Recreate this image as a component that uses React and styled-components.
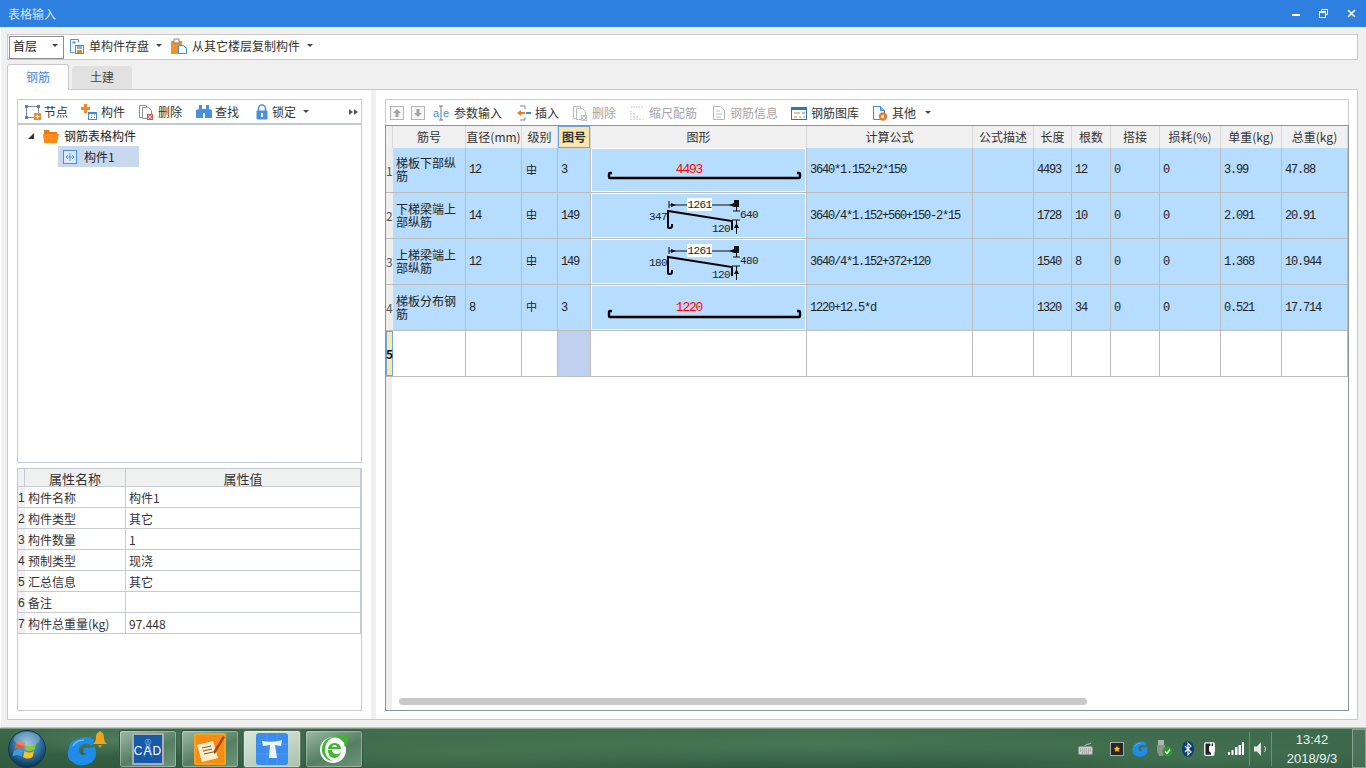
import React from "react";
import styled, { createGlobalStyle } from "styled-components";

const GlobalStyle = createGlobalStyle`
  html, body { margin: 0; padding: 0; overflow: hidden; }
  body { font-family: "Noto Sans CJK SC", "Liberation Sans", sans-serif; font-size: 12px; color: #333; }
  * { box-sizing: border-box; }
`;

const Screen = styled.div`
  width: 1366px;
  height: 768px;
  display: flex;
  flex-direction: column;
  background: #f0f0f0;
`;

const TitleBar = styled.div`
  height: 27px;
  flex: none;
  background: #2e7fe0;
  color: #d6e6fa;
  display: flex;
  align-items: center;
  padding: 0 10px 0 8px;
  line-height: 27px;
`;

const TitleText = styled.div`
  flex: 1;
`;

const WinButtons = styled.div`
  display: flex;
  align-items: center;
  gap: 19px;
`;

const Window = styled.div`
  flex: 1;
  min-height: 0;
  display: flex;
  flex-direction: column;
  padding: 7px 8px 7px 6px;
  border-left: 1px solid #fff;
  border-bottom: 1px solid #c4c4c4;
`;

const TopBar = styled.div`
  height: 26px;
  flex: none;
  background: #fff;
  border: 1px solid #c9c9c9;
  display: flex;
  align-items: center;
  padding-left: 1px;
`;

const Floor = styled.div`
  width: 55px;
  height: 23px;
  border: 1px solid #8f8f8f;
  background: #fff;
  color: #222;
  display: flex;
  align-items: center;
  justify-content: space-between;
  padding: 0 5px 3px 3px;
  margin-right: 5px;
`;

const TopTool = styled.div`
  display: flex;
  align-items: center;
  gap: ${(p) => p.$gap}px;
  margin-left: ${(p) => p.$left || 0}px;
  padding-bottom: 3px;
  white-space: nowrap;
`;

const Caret = styled.span`
  display: inline-block;
  width: 0;
  height: 0;
  border-left: 3px solid transparent;
  border-right: 3px solid transparent;
  border-top: 3px solid #444;
  margin-left: ${(p) => p.$left || 0}px;
`;

const Tool = styled.div`
  display: flex;
  align-items: center;
  gap: ${(p) => p.$gap || 5}px;
  color: ${(p) => (p.$off ? "#a6a6a6" : "#333")};
  white-space: nowrap;
  margin-left: ${(p) => p.$left || 0}px;
`;

const Tabs = styled.div`
  height: 29px;
  flex: none;
  display: flex;
  align-items: flex-end;
  padding-top: 4px;
  gap: 3px;
  position: relative;
  z-index: 1;
`;

const Tab = styled.div`
  height: ${(p) => (p.$on ? 26 : 23)}px;
  width: ${(p) => (p.$on ? 62 : 60)}px;
  margin-bottom: ${(p) => (p.$on ? -1 : 0)}px;
  padding-bottom: 2px;
  background: ${(p) => (p.$on ? "#fff" : "#e1e1e1")};
  color: ${(p) => (p.$on ? "#3d8ae6" : "#444")};
  border: ${(p) => (p.$on ? "1px solid #c9c9c9" : "none")};
  border-bottom: none;
  border-radius: 3px 3px 0 0;
  display: flex;
  align-items: center;
  justify-content: center;
  font-size: 12px;
`;

const Panel = styled.div`
  flex: 1;
  min-height: 0;
  background: #fff;
  border: 1px solid #c9c9c9;
  display: flex;
  padding: 9px 0 8px 9px;
`;

const LeftCol = styled.div`
  width: 345px;
  flex: none;
  display: flex;
  flex-direction: column;
  gap: 5px;
`;

const Splitter = styled.div`
  width: 5px;
  flex: none;
  margin: -9px 0 -8px 9px;
  background: #f0f0f0;
`;

const RightCol = styled.div`
  width: 964px;
  margin-left: 9px;
  flex: none;
  display: flex;
  flex-direction: column;
`;

const TreeBox = styled.div`
  height: 364px;
  flex: none;
  border: 1px solid #c5cad3;
  display: flex;
  flex-direction: column;
`;

const TreeTools = styled.div`
  height: 25px;
  flex: none;
  display: flex;
  align-items: center;
  padding-left: 7px;
  border-bottom: 2px solid #c5cad3;
`;

const More = styled.div`
  margin-left: auto;
  margin-right: 3px;
  display: flex;
  gap: 1px;
`;

const MoreArrow = styled.span`
  width: 0;
  height: 0;
  border-top: 3px solid transparent;
  border-bottom: 3px solid transparent;
  border-left: 4px solid #555;
`;

const TreeArrow = styled.span`
  width: 0;
  height: 0;
  border-left: 6px solid transparent;
  border-bottom: 6px solid #333;
`;

const TreeRow = styled.div`
  display: flex;
  align-items: center;
  height: 21px;
  margin-left: ${(p) => p.$indent}px;
  width: ${(p) => p.$width || "auto"};
  background: ${(p) => (p.$selected ? "#c8d8ee" : "transparent")};
  padding-left: ${(p) => (p.$selected ? 5 : 0)}px;
  gap: ${(p) => p.$gap}px;
  color: #222;
`;

const PropBox = styled.div`
  flex: 1;
  border: 1px solid #c5cad3;
`;

const PropGrid = styled.div`
  display: grid;
  grid-template-columns: 7px 101px 235px;
`;

const PropHead = styled.div`
  height: 18px;
  background: #f0f0f0;
  border-bottom: 1px solid #c5cad3;
  border-right: 1px solid #c5cad3;
  text-align: center;
  line-height: 20px;
  font-size: 13px;
  color: #333;
`;

const PropIdx = styled.div`
  height: 21px;
  background: #f0f0f0;
  border-bottom: 1px solid #c5cad3;
  font-family: "Liberation Sans", sans-serif;
  font-size: 12px;
  line-height: 23px;
  white-space: nowrap;
  color: #333;
`;

const PropCell = styled.div`
  height: 21px;
  border-bottom: 1px solid #c5cad3;
  border-right: 1px solid #c5cad3;
  padding-left: 3px;
  line-height: 21px;
  color: #333;
  white-space: nowrap;
`;

const GridTools = styled.div`
  height: 26px;
  flex: none;
  border: 1px solid #c9ccd2;
  border-bottom: none;
  display: flex;
  align-items: center;
  padding-left: 4px;
`;

const GridBox = styled.div`
  flex: 1;
  min-height: 0;
  position: relative;
  border: 1px solid #8e949c;
  background: linear-gradient(90deg, #eee 6px, #fff 6px);
`;

const Table = styled.table`
  table-layout: fixed;
  border-collapse: separate;
  border-spacing: 0;
  width: 962px;
`;

const Th = styled.th`
  height: 22px;
  padding: 0 0 2px;
  font-weight: ${(p) => (p.$active ? 700 : 400)};
  font-size: 12px;
  color: #333;
  background: ${(p) => (p.$active ? "#ffe6a8" : "#f0f0f0")};
  border-right: 1px solid #d8d8d8;
  box-shadow: ${(p) => (p.$active ? "inset 0 0 0 1px #6ba6e8" : "none")};
  white-space: nowrap;
  overflow: hidden;
`;

const Tr = styled.tr`
  height: 46px;
  &:nth-child(1) {
    height: 45px;
  }
`;

const Td = styled.td`
  padding: 0 0 0 3px;
  background: ${(p) => p.$bg || "#b6dcfe"};
  border-right: 1px solid #bcbcbc;
  border-bottom: 1px solid #bcbcbc;
  font-family: "Liberation Mono", "Noto Sans CJK SC", monospace;
  font-size: 12px;
  letter-spacing: -1.2px;
  color: #222;
  white-space: nowrap;
`;

const NameTd = styled(Td)`
  font-family: "Noto Sans CJK SC", sans-serif;
  font-size: 12px;
  letter-spacing: 0;
  line-height: 13px;
  white-space: normal;
  padding-left: 3px;
  padding-bottom: 2px;
  word-break: break-all;
`;

const IdxTd = styled.td`
  padding: 0;
  background: ${(p) => (p.$current ? "#fbe7a6" : "#eee")};
  border-bottom: 1px solid #bcbcbc;
  box-shadow: ${(p) => (p.$current ? "inset 0 0 0 1px #6ba6e8" : "none")};
  font-size: 12px;
  font-weight: ${(p) => (p.$current ? 700 : 400)};
  color: ${(p) => (p.$current ? "#111" : "#555")};
  white-space: nowrap;
  overflow: visible;
`;

const ShapeTd = styled(Td)`
  padding: 0;
  box-shadow: inset 0 0 0 1px #fff;
  line-height: 0;
`;

const Grade = styled.span`
  position: relative;
  top: -1px;
  display: inline-block;
  margin-left: 1px;
  font-family: "Noto Sans CJK SC", sans-serif;
  font-size: 11px;
  letter-spacing: 0;
  &::after {
    content: "";
    display: ${(p) => (p.$bar ? "block" : "none")};
    position: absolute;
    left: 1px;
    right: 1px;
    bottom: 3px;
    height: 1px;
    background: #222;
  }
`;

const Scrollbar = styled.div`
  position: absolute;
  left: 13px;
  bottom: 5px;
  width: 688px;
  height: 7px;
  border-radius: 4px;
  background: #c9c9c9;
`;

const Taskbar = styled.div`
  height: 40px;
  flex: none;
  display: flex;
  align-items: center;
  color: #fff;
  border-top: 1px solid #7d9a86;
  background:
    radial-gradient(ellipse 120px 16px at 9% 30%, rgba(120, 170, 130, 0.35), transparent),
    radial-gradient(ellipse 300px 30px at 34% 60%, rgba(90, 140, 100, 0.45), transparent),
    radial-gradient(ellipse 360px 24px at 60% 40%, rgba(95, 150, 110, 0.4), transparent),
    radial-gradient(ellipse 260px 30px at 88% 70%, rgba(85, 135, 100, 0.45), transparent),
    linear-gradient(180deg, #3d6a4b, #2f5a3e);
`;

const Orb = styled.div`
  width: 38px;
  height: 38px;
  margin-left: 8px;
  flex: none;
`;

const Pinned = styled.div`
  position: relative;
  width: 40px;
  height: 38px;
  margin-left: 21px;
  flex: none;
  padding-top: 6px;
`;

const BellBadge = styled.div`
  position: absolute;
  left: 25px;
  top: 1px;
`;

const TaskGroup = styled.div`
  display: flex;
  gap: 4px;
  margin-left: 12px;
`;

const TaskBtn = styled.div`
  width: 58px;
  height: 38px;
  border: 1px solid rgba(20, 45, 30, 0.6);
  border-radius: 3px;
  box-shadow: inset 0 0 0 1px rgba(255, 255, 255, 0.32);
  background: ${(p) =>
    p.$hot
      ? "linear-gradient(160deg, #dbe8dd, #a9c2ad)"
      : "linear-gradient(155deg, #9cbaa4, #557f63 55%, #6c9478)"};
  display: flex;
  align-items: center;
  justify-content: center;
`;

const Tray = styled.div`
  margin-left: auto;
  display: flex;
  align-items: center;
  height: 100%;
`;

const TraySlot = styled.div`
  display: flex;
  align-items: center;
  justify-content: center;
  width: ${(p) => p.$w}px;
  margin-left: ${(p) => p.$left || 0}px;
`;

const TraySep = styled.div`
  width: 1px;
  height: 34px;
  background: rgba(255, 255, 255, 0.25);
  margin: 0 ${(p) => p.$right}px 0 ${(p) => p.$leftGap}px;
`;

const Clock = styled.div`
  width: 80px;
  text-align: center;
  font-family: "Liberation Sans", sans-serif;
  font-size: 13px;
  line-height: 19px;
  color: #eef4ee;
`;

const ShowDesktop = styled.div`
  width: 14px;
  height: 39px;
  border: 1px solid rgba(255, 255, 255, 0.35);
  background: rgba(255, 255, 255, 0.08);
`;

/* ---------- icons ---------- */

const Ico = ({ w = 16, h = 16, children }) => (
  <svg width={w} height={h} viewBox={`0 0 ${w} ${h}`} style={{ display: "block", flex: "none" }}>
    {children}
  </svg>
);

const SaveIcon = () => (
  <Ico>
    <path d="M1.5 1.5h8v3M1.5 1.5v13h4" fill="none" stroke="#4a93dd" />
    <rect x="3.5" y="3.5" width="3" height="2" fill="#4a93dd" />
    <rect x="6.5" y="7.5" width="8" height="8" fill="#fff" stroke="#3d8ad6" />
    <rect x="8" y="8" width="5" height="3" fill="#7db4ea" />
    <rect x="8" y="12" width="5" height="3" fill="#e8862a" />
  </Ico>
);
const ClipIcon = () => (
  <Ico>
    <rect x="0" y="3" width="11" height="13" fill="#ee9327" />
    <rect x="3" y="1" width="5" height="4" fill="#f4f4f4" stroke="#777" strokeWidth="0.8" />
    <path d="M7.5 7.5h5l3 3v5h-8z" fill="#fff" stroke="#3f8bdb" />
  </Ico>
);
const NodeIcon = () => (
  <Ico>
    <rect x="1.5" y="2.5" width="12" height="11" fill="none" stroke="#7d8a98" />
    <rect x="0" y="1" width="3" height="3" fill="#3f8bdb" />
    <rect x="12" y="1" width="3" height="3" fill="#3f8bdb" />
    <rect x="0" y="12" width="3" height="3" fill="#3f8bdb" />
    <rect x="9" y="9" width="7" height="7" fill="#f08a24" />
    <path d="M12.5 10.5v4M10.5 12.5h4" stroke="#fff" />
  </Ico>
);
const AddPartIcon = () => (
  <Ico>
    <path d="M3 0h3v3h3v3H6v3H3V6H0V3h3z" fill="#ee8a2c" />
    <rect x="7.5" y="8.5" width="8" height="7" fill="#fff" stroke="#3f8bdb" />
    <rect x="7" y="8" width="9" height="2" fill="#3f8bdb" />
    <path d="M10 11h1M13 11h1M10 13.5h1M13 13.5h1" stroke="#3f8bdb" />
  </Ico>
);
const DelIcon = ({ off }) => (
  <Ico>
    <path d="M1.5 1.5h7v12h-7z" fill="#fff" stroke={off ? "#bbb" : "#8a8f96"} />
    <path d="M4.5 3.5h6l3 3v8h-9z" fill="#fff" stroke={off ? "#bbb" : "#8a8f96"} />
    <rect x="9" y="10" width="6" height="6" fill={off ? "#c4c4c4" : "#d9534f"} />
    <path d="M10 11l4 4M14 11l-4 4" stroke="#fff" />
  </Ico>
);
const BinoIcon = () => (
  <Ico>
    <path d="M3 1h3v4h4V1h3v4l3 1v8H9V9H7v5H0V6l3-1z" fill="#4a90dc" />
    <rect x="7" y="6" width="2" height="2" fill="#4a90dc" />
  </Ico>
);
const LockIcon = () => (
  <Ico>
    <path d="M4.5 7V4.5a3.5 3.5 0 0 1 7 0V7" fill="none" stroke="#4a90dc" strokeWidth="1.6" />
    <rect x="2.5" y="6.5" width="11" height="9" rx="1" fill="#4a90dc" />
    <rect x="7" y="9" width="2" height="4" fill="#fff" />
  </Ico>
);
const FolderIcon = () => (
  <Ico>
    <path d="M1 2h5l1 2h7v2H1z" fill="#e97a10" />
    <path d="M0 6h16l-2 9H1z" fill="#ff8a1a" />
  </Ico>
);
const PartIcon = () => (
  <Ico w={14} h={14}>
    <rect x="0.5" y="0.5" width="13" height="13" fill="#dbe9f9" stroke="#4a90dc" />
    <path d="M7 3v8M3 7h8M5 5L3 7l2 2M9 5l2 2-2 2" fill="none" stroke="#4a90dc" strokeWidth="0.8" />
  </Ico>
);
const MoveIcon = ({ down }) => (
  <Ico w={14} h={14}>
    <rect x="0.5" y="0.5" width="13" height="13" fill="#f6f6f6" stroke="#b5b5b5" />
    <path d={down ? "M7 11L3 7h2.5V3h3v4H11z" : "M7 3l4 4H8.5v4h-3V7H3z"} fill="#a3a3a3" />
  </Ico>
);
const ParamIcon = () => (
  <Ico>
    <text x="0" y="12" fontFamily="Liberation Sans" fontSize="11" fill="#3f8bdb">a</text>
    <text x="10" y="12" fontFamily="Liberation Sans" fontSize="11" fill="#3f8bdb">e</text>
    <path d="M8 1v14M6 1h4M6 15h4" stroke="#777" fill="none" />
  </Ico>
);
const InsertIcon = () => (
  <Ico w={14}>
    <path d="M3 1h5v3M3 15h5v-3" fill="none" stroke="#7f8890" />
    <path d="M0 8l4-3v2h4v2H4v2z" fill="#ee7d1c" />
    <rect x="9" y="7" width="5" height="2" fill="#3f8bdb" />
  </Ico>
);
const ScaleIcon = () => (
  <Ico>
    <path d="M1 15V5M4 15V8M7 15V11M10 15v-2M13 15v-1M1 2h12" stroke="#bcbcbc" strokeDasharray="1.5 1" fill="none" />
  </Ico>
);
const InfoIcon = () => (
  <Ico>
    <path d="M2.5 1.5h7l4 4v9h-11z" fill="#fff" stroke="#b8b8b8" />
    <path d="M5 6h4M5 9h6M5 12h5" stroke="#bdbdbd" />
  </Ico>
);
const LibraryIcon = () => (
  <Ico>
    <rect x="0.5" y="2.5" width="15" height="12" fill="#fff" stroke="#2f73c4" />
    <rect x="0" y="2" width="16" height="3" fill="#2f73c4" />
    <path d="M3 8h6M3 12h3M8 12h2M12 12h2" stroke="#c58a3e" />
    <path d="M11 8h3" stroke="#3f8bdb" />
  </Ico>
);
const OtherIcon = () => (
  <Ico>
    <path d="M1.5 1.5h7l4 4v9h-11z" fill="#fff" stroke="#3f8bdb" />
    <path d="M8.5 1.5v4h4" fill="#8fbdf0" stroke="#3f8bdb" />
    <circle cx="11" cy="11.5" r="3" fill="none" stroke="#ee7d1c" strokeWidth="2.4" />
  </Ico>
);
const MinIcon = () => (
  <Ico w={8} h={8}>
    <rect x="0" y="4" width="8" height="2" fill="#fff" />
  </Ico>
);
const RestoreIcon = () => (
  <Ico w={9} h={9}>
    <path d="M2.5 2.5V.5h6v5h-2" fill="none" stroke="#fff" />
    <rect x="0.5" y="2.5" width="6" height="6" fill="none" stroke="#fff" />
    <rect x="0" y="2" width="7" height="2" fill="#fff" />
  </Ico>
);
const CloseIcon = () => (
  <Ico w={9} h={9}>
    <path d="M1 1l7 7M8 1L1 8" stroke="#fff" strokeWidth="1.6" />
  </Ico>
);

/* ---------- bar shapes in the grid ---------- */

const LabelText = ({ x, y, children }) => (
  <text x={x} y={y} textAnchor="middle" fontFamily="Liberation Mono, monospace" fontSize="11" letterSpacing="-0.6" fill="#222">
    {children}
  </text>
);

const StraightBar = ({ label, h, barY, hook, textY }) => (
  <svg width="215" height={h} style={{ display: "block" }}>
    <text x="98" y={textY} textAnchor="middle" fontFamily="Liberation Mono, monospace" fontSize="13" fill="#f00">
      {label}
    </text>
    <path
      d={`M21 ${barY - hook}H19a1 1 0 0 0-1 1V${barY - 1}a1 1 0 0 0 1 1H208a1 1 0 0 0 1-1V${barY - hook + 1}a1 1 0 0 0-1-1H206`}
      fill="none"
      stroke="#000"
      strokeWidth="2.4"
    />
  </svg>
);

const BentBar = ({ left, right, h }) => (
  <svg width="215" height={h} style={{ display: "block" }}>
    <path d="M78 8v7M78 12h68M145.500 7v11" stroke="#111" fill="none" />
    <path d="M80 10l5 2-5 2zM143 10l-5 2 5 2z" fill="#111" />
    <rect x="143" y="7" width="5" height="7" fill="#111" />
    <path d="M142 18h7" stroke="#111" />
    <rect x="96" y="5" width="25" height="13" fill="#fff" />
    <LabelText x="108.500" y="15">1261</LabelText>
    <path d="M81 31v2a2 2 0 0 1-2 2h-1a1 1 0 0 1-1-1V18L141 28V37" fill="none" stroke="#000" strokeWidth="2" />
    <path d="M145.500 27v14M141 27h8" stroke="#111" fill="none" />
    <path d="M143 35h5l-2.500-5z" fill="#111" />
    <LabelText x="67" y="27">{left}</LabelText>
    <LabelText x="158" y="25">{right}</LabelText>
    <LabelText x="130" y="39">120</LabelText>
  </svg>
);

/* ---------- taskbar drawings ---------- */

const StartOrb = () => (
  <svg width="38" height="38" viewBox="0 0 38 38">
    <defs>
      <radialGradient id="orb" cx="50%" cy="35%" r="65%">
        <stop offset="0" stopColor="#7fb6d8" />
        <stop offset="0.6" stopColor="#2a6d9a" />
        <stop offset="1" stopColor="#0c2f4d" />
      </radialGradient>
    </defs>
    <circle cx="19" cy="19" r="18.500" fill="url(#orb)" stroke="#16394f" />
    <path d="M8 13c3-2 6-2 9 0l-1.500 6c-3-2-6-2-9 0z" fill="#ea5a3a" />
    <path d="M18.500 13.500c3 2 6 2 9.500 0l-1.500 6c-3 2-6 2-9.500 0z" fill="#8cc63f" />
    <path d="M6 20.500c3-2 6-2 9 0l-1.500 6c-3-2-6-2-9 0z" fill="#3d9be0" />
    <path d="M16.500 21c3 2 6 2 9.500 0l-1.500 6c-3 2-6 2-9.500 0z" fill="#f7c325" />
    <ellipse cx="19" cy="9" rx="13" ry="7" fill="#fff" opacity="0.22" />
  </svg>
);

const GIcon = ({ size = 30 }) => (
  <svg width={size} height={size} viewBox="0 0 30 30" style={{ display: "block" }}>
    <path
      d="M19 1c3 0 6 1 8 3l-2 6c-3-2-5-3-8-2-3 1-5 3-5 6 0 3 2 5 4 5 2 0 3-1 3-2h-3l1-5 11-1 1 4c1 8-5 14-12 14-4 1-7 0-10-2C4 25 1 24 1 19c-1-3 1-5 1-8 1-5 5-7 9-8 3-1 5-2 8-2z"
      fill="#1f8cea"
    />
    <path d="M6 10C8 6 12 4 17 4" stroke="#69b8f5" strokeWidth="1.500" fill="none" />
  </svg>
);

const Bell = () => (
  <svg width="16" height="17" viewBox="0 0 16 17" style={{ display: "block" }}>
    <circle cx="8" cy="1.500" r="1.500" fill="#e09a12" />
    <path d="M8 1c3 0 4 3 4 6 0 3 1 4 3 6H1c2-2 3-3 3-6 0-3 1-6 4-6z" fill="#f2a516" />
    <path d="M6 14h4l-2 3z" fill="#e09a12" />
  </svg>
);

const CadIcon = () => (
  <svg width="32" height="32" viewBox="0 0 32 32">
    <rect x="1" y="1" width="30" height="30" fill="#1559a8" stroke="#a8adb3" strokeWidth="2" />
    <path d="M16 6l-4 18M16 6l4 18M13 15h6" stroke="#5d93cf" fill="none" />
    <circle cx="16" cy="9" r="3" fill="none" stroke="#5d93cf" />
    <text x="16" y="22" textAnchor="middle" fontFamily="Liberation Sans" fontSize="12" letterSpacing="1" fill="#fff">CAD</text>
  </svg>
);

const NoteIcon = () => (
  <svg width="32" height="32" viewBox="0 0 32 32">
    <rect x="0" y="0" width="32" height="32" rx="2" fill="#f6a21c" />
    <rect x="2" y="2" width="28" height="28" fill="#f58d14" />
    <path d="M3 12l16-4 5 17-16 4z" fill="#fbeecb" />
    <path d="M8 15l9-2M9 18l9-2M10 21l9-2" stroke="#7b5a34" />
    <path d="M19 19L29 3l2 1-10 17z" fill="#b3410e" />
  </svg>
);

const TIcon = () => (
  <svg width="32" height="32" viewBox="0 0 32 32">
    <rect width="32" height="32" rx="3" fill="#3b8ded" />
    <path d="M0 11h32M0 21h32M11 0v32M21 0v32" stroke="#5aa2f1" strokeWidth="0.700" />
    <path d="M6 8c6 1 14 1 20-1l-1 6c-2 0-4-1-6-1l2 13h-8l1-13c-2 0-5 1-7 1z" fill="#eef5fd" />
  </svg>
);

const IeIcon = () => (
  <svg width="30" height="30" viewBox="0 0 30 30">
    <circle cx="14" cy="16" r="13" fill="#fff" />
    <path d="M3 17C2 9 8 3 15 3c-6 2-9 7-9 13 0 6 4 10 9 11-7 0-11-4-12-10z" fill="#3eb82e" />
    <path d="M9 15h13c0-4-3-6-6.500-6S9 12 9 15zm4-2c.5-1.500 1.500-2 2.500-2s2 .5 2.500 2z" fill="#3eb82e" fillRule="evenodd" />
    <path d="M9 16h4c0 4 5 6 9 2-1 4-4 6-7 6-4 0-6-4-6-8z" fill="#3eb82e" />
    <path d="M12 4C18 0 26 0 29 3c1 3-1 7-4 10 1-4 0-7-3-9-3-1-6-1-10 0z" fill="#3eb82e" />
  </svg>
);

const KeyboardIcon = () => (
  <Ico w={15} h={15}>
    <path d="M7 5c0-2 3-1 6-3" stroke="#c8cfc8" fill="none" />
    <rect x="0.500" y="5.500" width="14" height="8" rx="1.500" fill="#ccd2cc" stroke="#8d948d" />
    <path d="M2 8h11M2 10h11M4 12h7" stroke="#7c837c" strokeDasharray="1 1" />
  </Ico>
);

const StarBox = () => (
  <Ico w={14} h={14}>
    <rect x="0.500" y="0.500" width="13" height="13" fill="#262626" stroke="#aaa" />
    <path d="M7 3.500l1 2.300 2.400.2-1.800 1.600.6 2.400L7 8.800 4.800 10l.6-2.400L3.600 6 6 5.800z" fill="#f3c020" />
  </Ico>
);

const UsbIcon = () => (
  <Ico w={17} h={17}>
    <rect x="2" y="0" width="6" height="5" fill="#b0b5b0" />
    <path d="M1 5h8v6l-2 5H3l-2-5z" fill="#8d938d" />
    <circle cx="11.500" cy="11.500" r="5" fill="#2c9a2c" />
    <path d="M9 11.500l2 2 3-4" stroke="#fff" strokeWidth="1.300" fill="none" />
  </Ico>
);

const BlueTooth = () => (
  <Ico w={12} h={16}>
    <ellipse cx="6" cy="8" rx="6" ry="8" fill="#0b3d7e" />
    <path d="M3 5l6 6-3 3V2l3 3-6 6" fill="none" stroke="#fff" strokeWidth="1.100" />
  </Ico>
);

const PlugIcon = () => (
  <Ico w={15} h={15}>
    <rect x="0.800" y="1.800" width="9" height="12.500" rx="1" fill="#222" stroke="#fff" strokeWidth="1.300" />
    <path d="M6 5h5v5l-2 2v3H7v-3L5 10V5z" fill="#fff" />
    <path d="M7 1.500v3.500M10 1.500v3.500" stroke="#fff" strokeWidth="1.300" />
  </Ico>
);

const SignalIcon = () => (
  <Ico w={16} h={13}>
    <rect x="0" y="10" width="2" height="3" fill="#fff" />
    <rect x="3.500" y="8" width="2" height="5" fill="#fff" />
    <rect x="7" y="5" width="2.500" height="8" fill="#fff" />
    <rect x="10.500" y="3" width="2.500" height="10" fill="#fff" />
    <rect x="14" y="0" width="2" height="13" fill="#fff" />
  </Ico>
);

const SpeakerIcon = () => (
  <Ico w={13} h={14}>
    <path d="M0 4.500h3L7 0v14l-4-4.500H0z" fill="#e4e8e4" />
    <path d="M10 4c2 2 2 4 0 6" stroke="#d5dad5" fill="none" />
  </Ico>
);

/* ---------- data ---------- */

const columns = [
  ["筋号", 73], ["直径(mm)", 56], ["级别", 36], ["图号", 33], ["图形", 216], ["计算公式", 166],
  ["公式描述", 61], ["长度", 38], ["根数", 39], ["搭接", 49], ["损耗(%)", 61], ["单重(kg)", 61], ["总重(kg)", 66],
];

const rows = [
  { name: "梯板下部纵筋", d: "12", bar: true, no: "3", formula: "3640*1.152+2*150", len: "4493", n: "12", unit: "3.99", total: "47.88", shape: <StraightBar label="4493" h={44} barY={30} hook={5} textY={25} /> },
  { name: "下梯梁端上部纵筋", d: "14", bar: true, no: "149", formula: "3640/4*1.152+560+150-2*15", len: "1728", n: "10", unit: "2.091", total: "20.91", shape: <BentBar left="347" right="640" h={45} /> },
  { name: "上梯梁端上部纵筋", d: "12", bar: true, no: "149", formula: "3640/4*1.152+372+120", len: "1540", n: "8", unit: "1.368", total: "10.944", shape: <BentBar left="180" right="480" h={45} /> },
  { name: "梯板分布钢筋", d: "8", bar: false, no: "3", formula: "1220+12.5*d", len: "1320", n: "34", unit: "0.521", total: "17.714", shape: <StraightBar label="1220" h={45} barY={32} hook={6} textY={26} /> },
];

const props = [
  ["构件名称", "构件1"], ["构件类型", "其它"], ["构件数量", "1"], ["预制类型", "现浇"],
  ["汇总信息", "其它"], ["备注", ""], ["构件总重量(kg)", "97.448"],
];

export default function App() {
  return (
    <Screen>
      <GlobalStyle />
      <TitleBar>
        <TitleText>表格输入</TitleText>
        <WinButtons>
          <MinIcon />
          <RestoreIcon />
          <CloseIcon />
        </WinButtons>
      </TitleBar>

      <Window>
        <TopBar>
          <Floor>首层<Caret /></Floor>
          <TopTool $gap={4}><SaveIcon />单构件存盘<Caret $left={3} /></TopTool>
          <TopTool $gap={5} $left={9}><ClipIcon />从其它楼层复制构件<Caret $left={2} /></TopTool>
        </TopBar>

        <Tabs>
          <Tab $on>钢筋</Tab>
          <Tab>土建</Tab>
        </Tabs>

        <Panel>
          <LeftCol>
            <TreeBox>
              <TreeTools>
                <Tool $gap={3}><NodeIcon />节点</Tool>
                <Tool $gap={4} $left={13}><AddPartIcon />构件</Tool>
                <Tool $gap={4} $left={13}><DelIcon />删除</Tool>
                <Tool $gap={3} $left={14}><BinoIcon />查找</Tool>
                <Tool $gap={2} $left={15}><LockIcon />锁定<Caret $left={5} /></Tool>
                <More><MoreArrow /><MoreArrow /></More>
              </TreeTools>
              <TreeRow $indent={10} $gap={9}>
                <TreeArrow />
                <FolderIcon />
                <span style={{ marginLeft: -4 }}>钢筋表格构件</span>
              </TreeRow>
              <TreeRow $indent={40} $width="81px" $selected $gap={7}>
                <PartIcon />
                构件1
              </TreeRow>
            </TreeBox>

            <PropBox>
              <PropGrid>
                <PropHead />
                <PropHead>属性名称</PropHead>
                <PropHead>属性值</PropHead>
                {props.map(([k, v], i) => (
                  <React.Fragment key={k}>
                    <PropIdx>{i + 1}</PropIdx>
                    <PropCell>{k}</PropCell>
                    <PropCell>{v}</PropCell>
                  </React.Fragment>
                ))}
              </PropGrid>
            </PropBox>
          </LeftCol>

          <Splitter />

          <RightCol>
            <GridTools>
              <MoveIcon />
              <Tool $left={7}><MoveIcon down /></Tool>
              <Tool $left={8}><ParamIcon />参数输入</Tool>
              <Tool $left={15} $gap={4}><InsertIcon />插入</Tool>
              <Tool $left={13} $off $gap={4}><DelIcon off />删除</Tool>
              <Tool $left={14} $off $gap={3}><ScaleIcon />缩尺配筋</Tool>
              <Tool $left={14} $off $gap={3}><InfoIcon />钢筋信息</Tool>
              <Tool $left={13} $gap={4}><LibraryIcon />钢筋图库</Tool>
              <Tool $left={13} $gap={4}><OtherIcon />其他<Caret $left={5} /></Tool>
            </GridTools>
            <GridBox>
              <Table>
                <colgroup>
                  <col style={{ width: 7 }} />
                  {columns.map(([t, w]) => <col key={t} style={{ width: w }} />)}
                </colgroup>
                <thead>
                  <tr>
                    <Th />
                    {columns.map(([t]) => <Th key={t} $active={t === "图号"}>{t}</Th>)}
                  </tr>
                </thead>
                <tbody>
                  {rows.map((r, i) => (
                    <Tr key={r.name}>
                      <IdxTd>{i + 1}</IdxTd>
                      <NameTd>{r.name}</NameTd>
                      <Td>{r.d}</Td>
                      <Td><Grade $bar={r.bar}>中</Grade></Td>
                      <Td>{r.no}</Td>
                      <ShapeTd>{r.shape}</ShapeTd>
                      <Td>{r.formula}</Td>
                      <Td />
                      <Td>{r.len}</Td>
                      <Td>{r.n}</Td>
                      <Td>0</Td>
                      <Td>0</Td>
                      <Td>{r.unit}</Td>
                      <Td>{r.total}</Td>
                    </Tr>
                  ))}
                  <Tr>
                    <IdxTd $current>5</IdxTd>
                    {columns.map(([t]) => <Td key={t} $bg={t === "图号" ? "#bfd1ee" : "#fff"} />)}
                  </Tr>
                </tbody>
              </Table>
              <Scrollbar />
            </GridBox>
          </RightCol>
        </Panel>
      </Window>

      <Taskbar>
        <Orb><StartOrb /></Orb>
        <Pinned>
          <GIcon />
          <BellBadge><Bell /></BellBadge>
        </Pinned>
        <TaskGroup>
          <TaskBtn><CadIcon /></TaskBtn>
          <TaskBtn><NoteIcon /></TaskBtn>
          <TaskBtn $hot><TIcon /></TaskBtn>
          <TaskBtn><IeIcon /></TaskBtn>
        </TaskGroup>
        <Tray>
          <TraySlot $w={15}><KeyboardIcon /></TraySlot>
          <TraySlot $w={14} $left={17}><StarBox /></TraySlot>
          <TraySlot $w={16} $left={8}><GIcon size={16} /></TraySlot>
          <TraySlot $w={17} $left={8}><UsbIcon /></TraySlot>
          <TraySlot $w={12} $left={9}><BlueTooth /></TraySlot>
          <TraySlot $w={15} $left={10}><PlugIcon /></TraySlot>
          <TraySlot $w={16} $left={9}><SignalIcon /></TraySlot>
          <TraySep $leftGap={5} $right={4} />
          <SpeakerIcon />
          <TraySep $leftGap={4} $right={0} />
          <Clock>13:42<br />2018/9/3</Clock>
          <ShowDesktop />
        </Tray>
      </Taskbar>
    </Screen>
  );
}
